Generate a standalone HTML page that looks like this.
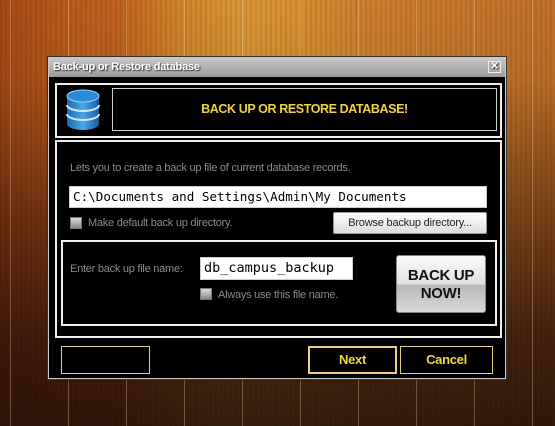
<!DOCTYPE html>
<html><head><style>
*{margin:0;padding:0;box-sizing:border-box}
body{width:555px;height:426px;overflow:hidden;position:relative;font-family:"Liberation Sans",sans-serif;background:#7a3a14;}
.wood{position:absolute;inset:0;
background:
repeating-linear-gradient(90deg,rgba(255,220,170,.3) 0 1px,rgba(0,0,0,0) 1px 58px),
repeating-linear-gradient(90deg,rgba(0,0,0,.08) 0 2px,rgba(0,0,0,0) 2px 5px),
linear-gradient(180deg,rgba(0,0,0,0) 0,rgba(0,0,0,.05) 80px,rgba(40,15,5,.5) 220px,rgba(30,10,5,.78) 340px,rgba(25,8,4,.85) 426px),
linear-gradient(90deg,#a84a18 0,#b85a1c 60px,#c0621e 120px,#d2852a 180px,#d89535 240px,#d88f30 300px,#cf8030 360px,#c97a2c 420px,#c07028 555px);
background-position:10px 0,0 0,0 0,0 0;}
.dlg{position:absolute;left:48px;top:57px;width:458px;height:322px;background:#000;border:1px solid #ccc;box-shadow:0 0 0 1px #333}
.title{position:absolute;left:0;top:0;width:456px;height:19px;background:linear-gradient(#c8c8c8,#9a9a9a);color:#fff;font-weight:bold;font-size:11px;line-height:19px;padding-left:4px;text-shadow:1px 1px 1px #333;letter-spacing:-.2px}
.x{position:absolute;right:4px;top:3px;width:13px;height:12px;border:1px solid #eee;background:#aaa;color:#fff;font-size:10px;line-height:10px;text-align:center}
.box{position:absolute;border:2px solid #eee}
.t{position:absolute;color:#8a8a8a;font-size:11px;white-space:nowrap;letter-spacing:-.25px}
.inp{position:absolute;background:#fff;border:1px solid #ccc;font-family:"DejaVu Sans Mono",monospace;color:#000}
.cb{position:absolute;width:12px;height:12px;background:linear-gradient(#ddd,#888);border:1px solid #777}
.btn{position:absolute;border:1px solid #e0d080;color:#f0d840;font-weight:bold;font-size:13px;text-align:center;letter-spacing:-.3px}
</style></head><body>
<div class="wood"></div>
<div class="dlg">
 <div class="title">Back-up or Restore database<div class="x">✕</div></div>
 <div class="box" style="left:6px;top:25px;width:447px;height:55px"></div>
 <svg style="position:absolute;left:15px;top:30px" width="38" height="45" viewBox="0 0 38 45">
  <defs><linearGradient id="g" x1="0" x2="1"><stop offset="0" stop-color="#1a6ab0"/><stop offset=".5" stop-color="#4aa8e8"/><stop offset="1" stop-color="#1a5a9a"/></linearGradient></defs>
  <path d="M3 8 V36 A16 6 0 0 0 35 36 V8 Z" fill="url(#g)"/>
  <path d="M3 17 A16 6 0 0 0 35 17 M3 26 A16 6 0 0 0 35 26" stroke="#cfe8f8" stroke-width="2" fill="none"/>
  <ellipse cx="19" cy="8" rx="16" ry="6" fill="#2a8ad8" stroke="#9cd0f4"/>
 </svg>
 <div class="box" style="left:63px;top:30px;width:385px;height:43px;border:1px solid #ccc;color:#f0d040;font-weight:bold;font-size:12.5px;letter-spacing:-.4px;text-align:center;line-height:41px">BACK UP OR RESTORE DATABASE!</div>
 <div class="box" style="left:6px;top:82px;width:447px;height:198px"></div>
 <div class="t" style="left:21px;top:104px">Lets you to create a back up file of current database records.</div>
 <div class="inp" style="left:20px;top:128px;width:418px;height:22px;font-size:12.6px;line-height:20px;padding-left:3px">C:\Documents and Settings\Admin\My Documents</div>
 <div class="cb" style="left:21px;top:159px"></div>
 <div class="t" style="left:39px;top:159px">Make default back up directory.</div>
 <div style="position:absolute;left:284px;top:154px;width:154px;height:22px;background:linear-gradient(#fff,#ddd);border:1px solid #999;border-radius:2px;font-size:11px;letter-spacing:-.2px;text-align:center;line-height:20px;color:#222">Browse backup directory...</div>
 <div class="box" style="left:12px;top:182px;width:436px;height:86px"></div>
 <div class="t" style="left:21px;top:205px">Enter back up file name:</div>
 <div class="inp" style="left:151px;top:199px;width:153px;height:23px;font-size:13.5px;line-height:21px;padding-left:3px">db_campus_backup</div>
 <div class="cb" style="left:151px;top:230px"></div>
 <div class="t" style="left:169px;top:231px">Always use this file name.</div>
 <div style="position:absolute;left:347px;top:197px;width:90px;height:58px;background:linear-gradient(#fafafa,#e0e0e0 50%,#b8b8b8 52%,#d8d8d8);border:1px solid #888;border-radius:3px;font-weight:bold;font-size:15px;letter-spacing:-.3px;text-align:center;line-height:18px;padding-top:11px;color:#111">BACK UP<br>NOW!</div>
 <div class="btn" style="left:12px;top:288px;width:89px;height:28px"></div>
 <div class="btn" style="left:259px;top:288px;width:89px;height:28px;border:2px solid #e8d080;line-height:24px">Next</div>
 <div class="btn" style="left:351px;top:288px;width:93px;height:28px;line-height:26px">Cancel</div>
</div>
</body></html>
